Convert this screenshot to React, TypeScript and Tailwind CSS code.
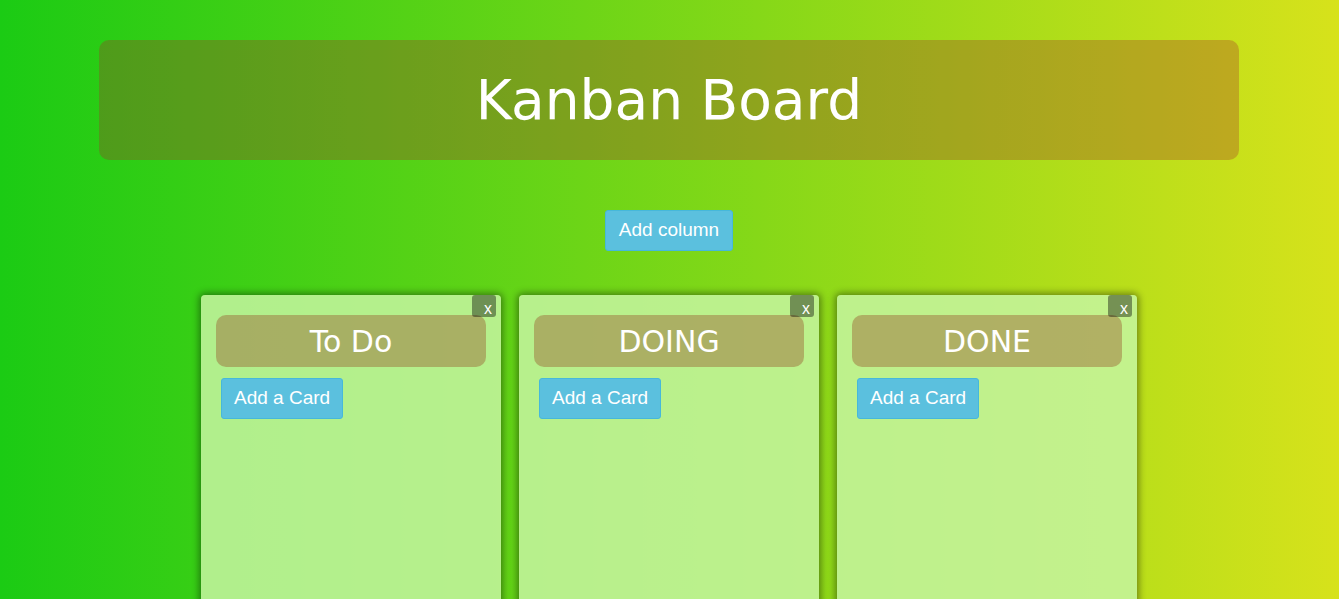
import React from "react";

const columns = ["To Do", "DOING", "DONE"];

function Column({ title }: { title: string }) {
  return (
    <div className="relative w-[300px] h-[340px] shrink-0 rounded-[4px] bg-[rgba(197,244,160,0.86)] shadow-[0_0_7px_2px_rgba(0,0,0,0.4)] px-[15px] pt-[20px]">
      <button className="absolute right-[5px] top-0 w-[24px] h-[22px] rounded-[3px] bg-[rgba(0,0,0,0.4)] text-white text-[16px] leading-none flex items-end justify-end pr-[4px] pb-0 font-['Liberation_Sans',Arial,sans-serif]">
        x
      </button>
      <div className="h-[52px] rounded-[10px] bg-[rgba(150,80,40,0.4)] flex items-center justify-center text-white text-[30px] font-['DejaVu_Sans',sans-serif]">
        {title}
      </div>
      <div className="mt-[11px] pl-[5px]">
        <button className="h-[41px] px-[12px] rounded-[3px] bg-[#5bc0de] border border-[#46b8da] text-white text-[19px] font-['Liberation_Sans',Arial,sans-serif]">
          Add a Card
        </button>
      </div>
    </div>
  );
}

export default function App() {
  return (
    <div className="w-full h-[599px] overflow-hidden bg-[linear-gradient(to_right,#1bcb14,#d7e21b)] pr-[1px]">
      <div className="pt-[40px] flex justify-center">
        <div className="w-[1140px] h-[120px] rounded-[10px] bg-[rgba(165,42,42,0.3)] flex items-center justify-center">
          <h1 className="text-white text-[55px] font-['DejaVu_Sans',sans-serif] leading-none">Kanban Board</h1>
        </div>
      </div>
      <div className="mt-[50px] flex justify-center">
        <button className="h-[41px] px-[13px] rounded-[3px] bg-[#5bc0de] border border-[#46b8da] text-white text-[19px] font-['Liberation_Sans',Arial,sans-serif]">
          Add column
        </button>
      </div>
      <div className="mt-[44px] flex justify-center gap-[18px]">
        {columns.map((c) => (
          <Column key={c} title={c} />
        ))}
      </div>
    </div>
  );
}
